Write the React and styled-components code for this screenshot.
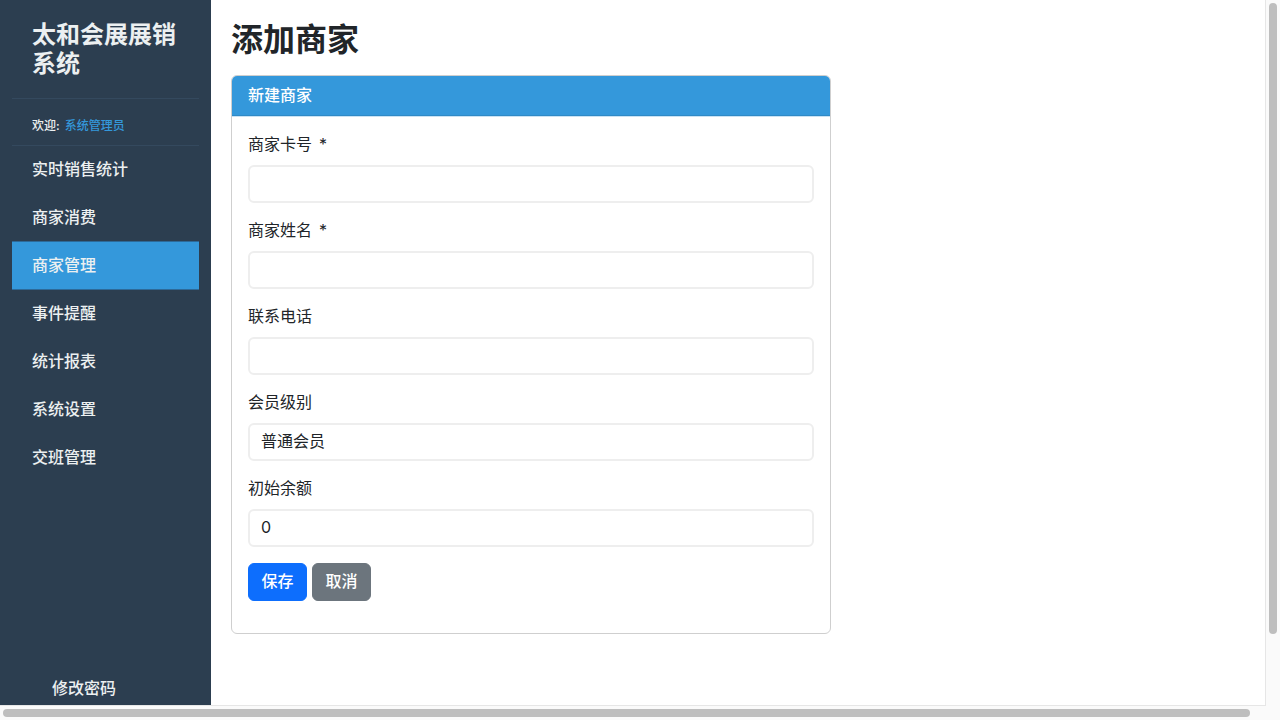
import React from "react";
import styled, { createGlobalStyle } from "styled-components";

const GlobalStyle = createGlobalStyle`
  html, body {
    margin: 0;
    height: 100%;
    overflow: hidden;
    background: #fff;
  }
  * {
    box-sizing: border-box;
  }
  body {
    font-family: Inter, "Noto Sans CJK SC", sans-serif;
    color: #212529;
  }
`;

const Frame = styled.div`
  display: grid;
  grid-template-columns: 1266px 1fr;
  grid-template-rows: 706px 1fr;
  width: 1280px;
  height: 720px;
  background: #fafafa;
`;

const Viewport = styled.div`
  display: flex;
  background: #fff;
  border-right: 1px solid #e6e6e6;
  border-bottom: 1px solid #e6e6e6;
  overflow: hidden;
`;

const Sidebar = styled.aside`
  display: flex;
  flex-direction: column;
  flex: 0 0 211px;
  padding: 0 12px;
  background: #2c3e50;
  color: #ecf0f1;
`;

const Brand = styled.div`
  height: 99px;
  padding: 20px;
  font-size: 24px;
  font-weight: 700;
  line-height: 29px;
  color: #ecf0f1;
  border-bottom: 1px solid #34495e;
`;

const Welcome = styled.div`
  display: flex;
  align-items: center;
  height: 47px;
  padding: 4px 20px 0;
  font-size: 12px;
  font-weight: 500;
  border-bottom: 1px solid #34495e;
  span {
    color: #3498db;
    margin-left: 5px;
  }
`;

const NavList = styled.nav`
  display: flex;
  flex-direction: column;
  flex: 1;
`;

const NavItem = styled.a`
  display: flex;
  align-items: center;
  height: 48px;
  padding: 0 20px 4px;
  font-size: 16px;
  font-weight: 500;
  color: #ecf0f1;
  background: ${(p) => (p.$active ? "#3498db" : "transparent")};
  box-shadow: ${(p) => (p.$active ? "0 -1px 0 #2d6a99, inset 0 -1px 0 #2d6a99" : "none")};
`;

const FooterLink = styled.a`
  display: flex;
  align-items: center;
  height: 34px;
  padding: 0 0 2px 40px;
  font-size: 16px;
  font-weight: 500;
  color: #ecf0f1;
`;

const Main = styled.main`
  flex: 1;
  padding: 20px;
`;

const Title = styled.h1`
  margin: 0 0 15px;
  font-size: 32px;
  font-weight: 700;
  line-height: 40px;
  color: #212529;
`;

const Card = styled.section`
  width: 600px;
  height: 559px;
  border: 1px solid #cfcfcf;
  border-radius: 6px;
  overflow: hidden;
`;

const CardHeader = styled.header`
  display: flex;
  align-items: center;
  height: 41px;
  padding: 0 16px 4px;
  background: #3498db;
  border-bottom: 1px solid #c9e2f4;
  box-shadow: inset 0 -1px 0 #2f8ac6;
  font-size: 16px;
  font-weight: 500;
  color: #fff;
`;

const CardBody = styled.div`
  padding: 16px;
`;

const Field = styled.div`
  margin-bottom: 16px;
`;

const Label = styled.label`
  display: block;
  height: 24px;
  margin-bottom: 8px;
  font-size: 16px;
  line-height: 22px;
  color: #212529;
  em {
    font-style: normal;
    margin-left: 7px;
  }
`;

const Input = styled.input`
  display: block;
  width: 100%;
  height: 38px;
  padding: ${(p) => (p.$cjk ? "4px 11px 8px" : "5px 11px 7px")};
  border: 2px solid #eeeeee;
  border-radius: 6px;
  background: #fff;
  font-family: inherit;
  font-size: 16px;
  color: #212529;
  outline: none;
`;

const Actions = styled.div`
  display: flex;
  gap: 5px;
`;

const Button = styled.button`
  height: 38px;
  width: 59px;
  padding: 0 0 4px;
  border: 1px solid ${(p) => (p.$secondary ? "#6c757d" : "#0d6efd")};
  border-radius: 6px;
  background: ${(p) => (p.$secondary ? "#6c757d" : "#0d6efd")};
  font-family: inherit;
  font-size: 16px;
  font-weight: 500;
  color: #fff;
`;

const VTrack = styled.div`
  position: relative;
  background: #fafafa;
`;

const VThumb = styled.div`
  position: absolute;
  top: 3px;
  left: 3px;
  width: 8px;
  height: 631px;
  border-radius: 4px;
  background: #bebebe;
`;

const HTrack = styled.div`
  position: relative;
  grid-column: 1 / -1;
  background: #fafafa;
`;

const HThumb = styled.div`
  position: absolute;
  top: 3px;
  left: 3px;
  width: 1247px;
  height: 8px;
  border-radius: 4px;
  background: #bebebe;
`;

const menu = ["实时销售统计", "商家消费", "商家管理", "事件提醒", "统计报表", "系统设置", "交班管理"];

const fields = [
  { label: "商家卡号", required: true, value: "" },
  { label: "商家姓名", required: true, value: "" },
  { label: "联系电话", value: "" },
  { label: "会员级别", value: "普通会员", cjk: true },
  { label: "初始余额", value: "0" },
];

export default function App() {
  return (
    <>
      <GlobalStyle />
      <Frame>
        <Viewport>
          <Sidebar>
            <Brand>太和会展展销系统</Brand>
            <Welcome>
              欢迎:<span>系统管理员</span>
            </Welcome>
            <NavList>
              {menu.map((item) => (
                <NavItem key={item} $active={item === "商家管理"}>
                  {item}
                </NavItem>
              ))}
            </NavList>
            <FooterLink>修改密码</FooterLink>
          </Sidebar>
          <Main>
            <Title>添加商家</Title>
            <Card>
              <CardHeader>新建商家</CardHeader>
              <CardBody>
                {fields.map((f) => (
                  <Field key={f.label}>
                    <Label>
                      {f.label}
                      {f.required && <em>*</em>}
                    </Label>
                    <Input defaultValue={f.value} $cjk={f.cjk} />
                  </Field>
                ))}
                <Actions>
                  <Button>保存</Button>
                  <Button $secondary>取消</Button>
                </Actions>
              </CardBody>
            </Card>
          </Main>
        </Viewport>
        <VTrack>
          <VThumb />
        </VTrack>
        <HTrack>
          <HThumb />
        </HTrack>
      </Frame>
    </>
  );
}
